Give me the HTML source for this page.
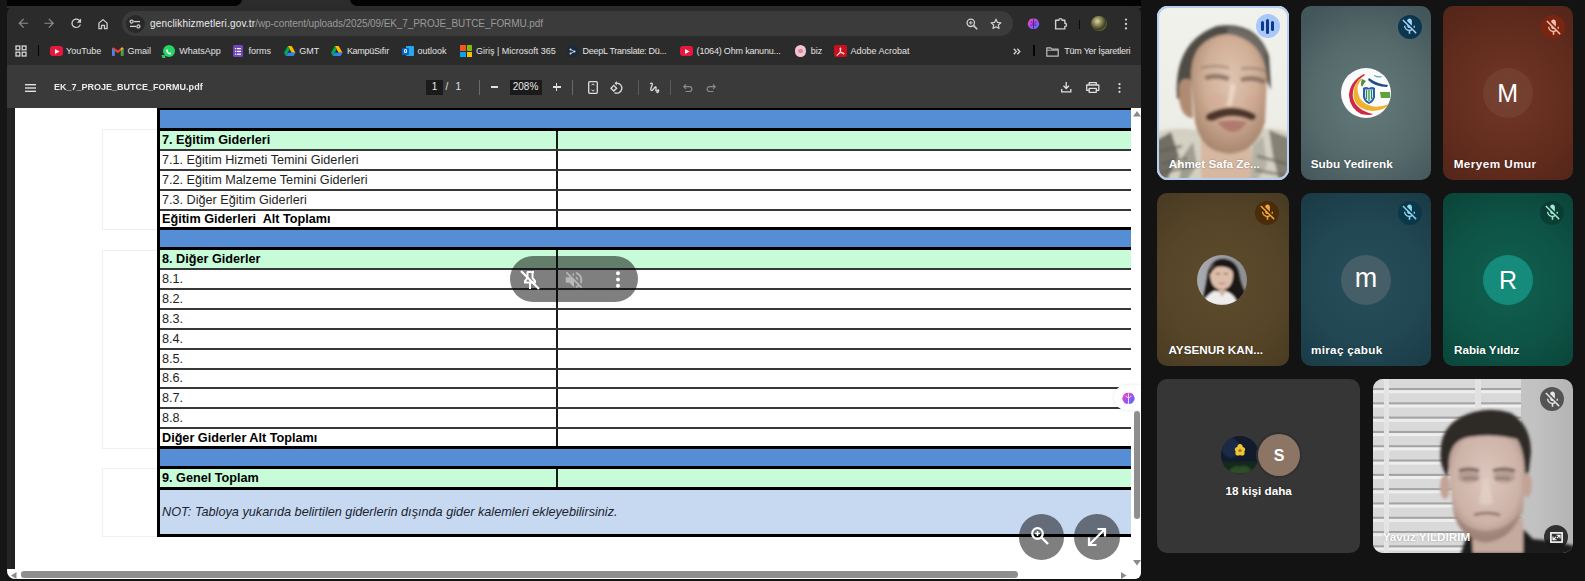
<!DOCTYPE html><html><head><meta charset='utf-8'><style>
*{margin:0;padding:0;box-sizing:border-box}
html,body{width:1585px;height:581px;overflow:hidden}
body{background:#131313;position:relative;font-family:"Liberation Sans",sans-serif}
.a{position:absolute}
.tn{font-size:12.65px;color:#1e1e1e;white-space:pre}
.tb{font-size:12.65px;color:#000;font-weight:bold;white-space:pre}
.bm{font-size:9px;color:#e3e3e3;white-space:pre;line-height:12px;top:45px}
svg{position:absolute;overflow:visible}
</style></head><body>
<div class="a" style="left:0;top:0;width:1141px;height:8px;background:#2c2c2c"></div>
<div class="a" style="left:0;top:-6px;width:242px;height:12px;border-radius:0 0 7px 0;background:#030303"></div>
<div class="a" style="left:350px;top:-6px;width:791px;height:12px;border-radius:0 0 0 7px;background:#030303"></div>
<div class="a" style="left:0;top:0;width:7px;height:581px;background:#161616"></div>
<div class="a" style="left:7px;top:6px;width:1134px;height:573px;background:#2b2b2b;border-radius:8px 8px 6px 8px;overflow:hidden">
<div class="a" style="left:0;top:59px;width:1134px;height:43px;background:#3a3a3a"></div>
<div class="a" style="left:0;top:102px;width:1134px;height:471px;background:#fff"></div>
<div class="a" style="left:0;top:102px;width:8px;height:461px;background:linear-gradient(90deg,#262626,#1e1e1e)"></div>
</div>
<svg style="left:15.65px;top:16.15px" width="14.5" height="14.5" viewBox="0 0 24 24"><path d="M20 11H7.83l5.59-5.59L12 4l-8 8 8 8 1.41-1.41L7.83 13H20v-2z" fill="#8c8c8c"/></svg>
<svg style="left:42.25px;top:16.15px" width="14.5" height="14.5" viewBox="0 0 24 24"><path d="M4 11h12.17l-5.59-5.59L12 4l8 8-8 8-1.41-1.41L16.17 13H4v-2z" fill="#8c8c8c"/></svg>
<svg style="left:69.15px;top:16.05px" width="14.5" height="14.5" viewBox="0 0 24 24"><path d="M17.65 6.35C16.2 4.9 14.21 4 12 4c-4.42 0-7.99 3.58-7.99 8s3.57 8 7.99 8c3.73 0 6.84-2.55 7.73-6h-2.08c-.82 2.33-3.04 4-5.65 4-3.31 0-6-2.69-6-6s2.69-6 6-6c1.66 0 3.14.69 4.22 1.78L13 11h7V4l-2.35 2.35z" fill="#d0d0d0"/></svg>
<svg style="left:95.80px;top:16.80px" width="14" height="14" viewBox="0 0 24 24"><path d="M5 20V10.5L12 4.5l7 6V20h-4.5v-5.5h-5V20z" fill="none" stroke="#d0d0d0" stroke-width="2.2" stroke-linejoin="round"/></svg>
<div class="a" style="left:122px;top:11px;width:891px;height:25px;border-radius:12.5px;background:#3b3b3b"></div>
<div class="a" style="left:125.5px;top:14.5px;width:19px;height:18px;border-radius:50%;background:#292929"></div>
<svg style="left:128.50px;top:18.00px" width="12" height="12" viewBox="0 0 12 12"><g stroke="#d0d0d0" stroke-width="1.3" fill="none"><circle cx="2.6" cy="3.6" r="1.5"/><path d="M5 3.6H11"/><circle cx="9.4" cy="8.4" r="1.5"/><path d="M1 8.4H7"/></g></svg>
<div class="a" style="left:150px;top:17px;font-size:10px;line-height:13px;white-space:pre;color:#9a9a9a"><span style="color:#ececec;letter-spacing:0.18px">genclikhizmetleri.gov.tr</span><span style="letter-spacing:-0.1px">/wp-content/uploads/2025/09/EK_7_PROJE_BUTCE_FORMU.pdf</span></div>
<svg style="left:966.20px;top:17.80px" width="12" height="12" viewBox="0 0 12 12"><g fill="none" stroke="#d0d0d0"><circle cx="4.8" cy="4.8" r="3.7" stroke-width="1.3"/><path d="M7.6 7.6L11.2 11.2" stroke-width="1.6"/><path d="M4.8 3v3.6M3 4.8h3.6" stroke-width="1"/></g></svg>
<svg style="left:989.80px;top:17.50px" width="12" height="12" viewBox="0 0 12 12"><path d="M6 1.2l1.45 3.2 3.45.35-2.6 2.3.75 3.4L6 8.7 2.95 10.45l.75-3.4-2.6-2.3 3.45-.35z" fill="none" stroke="#d0d0d0" stroke-width="1.2" stroke-linejoin="round"/></svg>
<svg style="left:1027.00px;top:17.30px" width="13" height="13" viewBox="0 0 12 12"><defs><linearGradient id="bg1" x1="0" y1="0" x2="1" y2="1"><stop offset="0" stop-color="#ff4fa0"/><stop offset=".5" stop-color="#a74cf2"/><stop offset="1" stop-color="#3d7bff"/></linearGradient></defs><path d="M6 1.5C4 1 1.5 2.3 1.3 4.5 0.3 5.5 0.5 8 1.8 9 2.5 11 5 11.5 6 10.5 7 11.5 9.5 11 10.2 9 11.5 8 11.7 5.5 10.7 4.5 10.5 2.3 8 1 6 1.5Z" fill="url(#bg1)"/><path d="M6 2v8.5M3.5 4.5c1 0 1.5.7 1.5 1.5M8.5 4.5c-1 0-1.5.7-1.5 1.5M3.2 7.5c1 .3 1.8 0 2.3-.5M8.8 7.5c-1 .3-1.8 0-2.3-.5" stroke="#3a1b6b" stroke-width=".7" fill="none"/></svg>
<svg style="left:1054.10px;top:17.30px" width="13" height="13" viewBox="0 0 12 12"><path d="M1.5 3h3a1.5 1.5 0 0 1 3 0h2.5v2.8a1.5 1.5 0 0 1 0 3V11H1.5z" fill="none" stroke="#d0d0d0" stroke-width="1.3" stroke-linejoin="round"/></svg>
<div class="a" style="left:1078.5px;top:19.5px;width:1.5px;height:9.5px;background:#0a0a0a"></div>
<div class="a" style="left:1091.3px;top:15.8px;width:15.5px;height:15.5px;border-radius:50%;background:radial-gradient(circle at 40% 35%,#d9d6b0 0,#8b8a55 30%,#3f3d22 60%,#7d7c62 85%,#a8a890 100%)"></div>
<svg style="left:1120.00px;top:18.00px" width="12" height="12" viewBox="0 0 12 12"><g fill="#d0d0d0"><circle cx="6" cy="1.6" r="1.15"/><circle cx="6" cy="6" r="1.15"/><circle cx="6" cy="10.4" r="1.15"/></g></svg>
<svg style="left:15.20px;top:45.00px" width="12" height="12" viewBox="0 0 12 12"><g fill="none" stroke="#d6d6d6" stroke-width="1.3"><rect x="1" y="1" width="3.8" height="3.8"/><rect x="7.2" y="1" width="3.8" height="3.8"/><rect x="1" y="7.2" width="3.8" height="3.8"/><rect x="7.2" y="7.2" width="3.8" height="3.8"/></g></svg>
<div class="a" style="left:37.5px;top:45px;width:1.5px;height:11px;background:#050505"></div>
<div class="a" style="left:49.5px;top:46px;width:13.5px;height:10px;border-radius:3px;background:#e8173c"></div><svg style="left:54.5px;top:48.5px" width="5" height="5"><path d="M0 0L4.5 2.5 0 5z" fill="#fff"/></svg>
<div class="a bm" style="left:66px">YouTube</div>
<svg style="left:112px;top:46.5px" width="11.5" height="9" viewBox="0 0 12 9"><path d="M0 1.2V9h2.8V3.8L6 6.2 9.2 3.8V9H12V1.2L10.5 0 6 3.4 1.5 0z" fill="#ea4335"/><path d="M0 1.2V9h2.8V3.8z" fill="#4285f4"/><path d="M9.2 3.8V9H12V1.2z" fill="#34a853"/><path d="M12 1.2L10.5 0 9.2 1v2.8z" fill="#fbbc04"/></svg>
<div class="a bm" style="left:127.6px">Gmail</div>
<div class="a" style="left:162.5px;top:45px;width:12px;height:12px;border-radius:50%;background:#25d366"></div><svg style="left:165px;top:47.5px" width="7" height="7" viewBox="0 0 7 7"><path d="M1.5 1.5c.3-.4.8-.4 1 0l.4 1c.1.3-.3.6-.3.6.4.8 1 1.4 1.8 1.8 0 0 .3-.4.6-.3l1 .4c.4.2.4.7 0 1-.8.7-2 .5-3.3-.5C1.5 4.5.8 2.4 1.5 1.5z" fill="#fff"/></svg>
<div class="a" style="left:162px;top:54.5px;width:3px;height:3px;background:#25d366;transform:skewX(20deg)"></div>
<div class="a bm" style="left:179.3px">WhatsApp</div>
<div class="a" style="left:233px;top:45px;width:10px;height:12px;border-radius:1.5px;background:#7248b9"></div>
<svg style="left:235px;top:47.5px" width="6" height="7"><g fill="#fff"><rect x="0" y="0" width="1.2" height="1.2"/><rect x="2" y="0" width="4" height="1.2"/><rect x="0" y="2.8" width="1.2" height="1.2"/><rect x="2" y="2.8" width="4" height="1.2"/><rect x="0" y="5.6" width="1.2" height="1.2"/><rect x="2" y="5.6" width="4" height="1.2"/></g></svg>
<div class="a bm" style="left:248.4px">forms</div>
<svg style="left:283.5px;top:46px" width="11.5" height="10" viewBox="0 0 12 10.4"><path d="M4 0h4l4 6.9h-4z" fill="#ffba00"/><path d="M4 0L0 6.9l2 3.5L6 3.5z" fill="#00ac47"/><path d="M2 10.4h8l2-3.5H4z" fill="#2684fc"/></svg>
<div class="a bm" style="left:299.3px">GMT</div>
<svg style="left:331px;top:46px" width="11.5" height="10" viewBox="0 0 12 10.4"><path d="M4 0h4l4 6.9h-4z" fill="#ffba00"/><path d="M4 0L0 6.9l2 3.5L6 3.5z" fill="#00ac47"/><path d="M2 10.4h8l2-3.5H4z" fill="#2684fc"/></svg>
<div class="a bm" style="left:346.9px;letter-spacing:-0.3px">KampüSıfır</div>
<div class="a" style="left:406px;top:46px;width:8px;height:10px;border-radius:1px;background:#28a8ea"></div><div class="a" style="left:402px;top:47.5px;width:7px;height:7px;border-radius:1px;background:#0a64c4"></div><div class="a" style="left:403.8px;top:49.2px;width:3.4px;height:3.6px;border-radius:50%;border:1px solid #fff"></div>
<div class="a bm" style="left:417.6px">outlook</div>
<div class="a" style="left:460px;top:45px;width:5.5px;height:5.5px;background:#f35325"></div><div class="a" style="left:466.5px;top:45px;width:5.5px;height:5.5px;background:#81bc06"></div><div class="a" style="left:460px;top:51.5px;width:5.5px;height:5.5px;background:#05a6f0"></div><div class="a" style="left:466.5px;top:51.5px;width:5.5px;height:5.5px;background:#ffba08"></div>
<div class="a bm" style="left:476px">Giriş | Microsoft 365</div>
<div class="a" style="left:566.5px;top:45px;width:12px;height:12px;border-radius:50%;background:#1c2a38"></div>
<svg style="left:569px;top:47.5px" width="7" height="7" viewBox="0 0 7 7"><g fill="#cfe3ff"><circle cx="1.5" cy="1.5" r="1"/><circle cx="5.5" cy="3.5" r="1"/><circle cx="1.5" cy="5.5" r="1"/></g><path d="M1.5 1.5L5.5 3.5 1.5 5.5" stroke="#cfe3ff" stroke-width=".8" fill="none"/></svg>
<div class="a bm" style="left:582.6px;letter-spacing:-0.28px">DeepL Translate: Dü...</div>
<div class="a" style="left:679.5px;top:46px;width:13.5px;height:10px;border-radius:3px;background:#e8173c"></div><svg style="left:684.5px;top:48.5px" width="5" height="5"><path d="M0 0L4.5 2.5 0 5z" fill="#fff"/></svg>
<div class="a bm" style="left:696.6px;letter-spacing:-0.18px">(1064) Ohm kanunu...</div>
<div class="a" style="left:794.5px;top:45px;width:11.5px;height:11.5px;border-radius:50%;background:#f1c4cf"></div><div class="a" style="left:798px;top:48.5px;width:4.5px;height:4.5px;border-radius:50%;background:#d88a9c"></div>
<div class="a bm" style="left:810.7px">biz</div>
<div class="a" style="left:834px;top:45px;width:12.5px;height:12px;border-radius:2px;background:#c8101e"></div>
<svg style="left:836px;top:46.5px" width="9" height="9" viewBox="0 0 9 9"><path d="M4.5 .8C3.8 .8 4 3 4.8 4.6 5.6 6.1 7.8 7.6 8.2 6.8 8.6 6 6 5.5 4.5 5.8 3 6.1 1 7.6 .9 8.2 .8 8.8 2.7 7.3 3.6 5.8 4.6 4.1 5.2.8 4.5.8z" fill="none" stroke="#fff" stroke-width=".9"/></svg>
<div class="a bm" style="left:850.5px">Adobe Acrobat</div>
<svg style="left:1013px;top:47.5px" width="8" height="7" viewBox="0 0 8 7"><path d="M.8 .8L3.3 3.5.8 6.2M4.3.8L6.8 3.5 4.3 6.2" stroke="#d6d6d6" stroke-width="1.3" fill="none"/></svg>
<div class="a" style="left:1033px;top:45px;width:1.5px;height:11px;background:#050505"></div>
<svg style="left:1046px;top:46.5px" width="13" height="10" viewBox="0 0 13 10"><path d="M.8 .8h4l1.3 1.4h6.1v7H.8z" fill="none" stroke="#bdbdbd" stroke-width="1.2" stroke-linejoin="round"/><path d="M.8 3.2h11.4" stroke="#bdbdbd" stroke-width="1"/></svg>
<div class="a bm" style="left:1064.3px;letter-spacing:-0.25px">Tüm Yer İşaretleri</div>
<svg style="left:25px;top:83.5px" width="11" height="8" viewBox="0 0 11 8"><g fill="#e0e0e0"><rect x="0" y="0" width="11" height="1.4"/><rect x="0" y="3.3" width="11" height="1.4"/><rect x="0" y="6.6" width="11" height="1.4"/></g></svg>
<div class="a" style="left:54px;top:81.3px;font-size:9.5px;line-height:11px;font-weight:bold;color:#ececec;white-space:pre;transform-origin:0 0;transform:scaleX(0.948)">EK_7_PROJE_BUTCE_FORMU.pdf</div>
<div class="a" style="left:426px;top:79.5px;width:17px;height:15px;background:#1b1b1b"></div>
<div class="a" style="left:426px;top:81px;width:17px;text-align:center;font-size:10px;line-height:12px;color:#e8e8e8">1</div>
<div class="a" style="left:445.5px;top:81px;font-size:10px;line-height:12px;color:#e0e0e0;white-space:pre">/</div><div class="a" style="left:455.5px;top:81px;font-size:10px;line-height:12px;color:#e0e0e0;white-space:pre">1</div>
<div class="a" style="left:478.5px;top:80px;width:1.2px;height:15px;background:#6a6a6a"></div>
<div class="a" style="left:490.8px;top:86.3px;width:7.5px;height:1.4px;background:#e0e0e0"></div>
<div class="a" style="left:509.5px;top:79.5px;width:32px;height:15px;background:#1b1b1b"></div>
<div class="a" style="left:509.5px;top:81px;width:32px;text-align:center;font-size:10px;line-height:12px;color:#e8e8e8">208%</div>
<div class="a" style="left:552.5px;top:86.3px;width:8px;height:1.4px;background:#e0e0e0"></div><div class="a" style="left:555.8px;top:83px;width:1.4px;height:8px;background:#e0e0e0"></div>
<div class="a" style="left:572px;top:80px;width:1.2px;height:15px;background:#6a6a6a"></div>
<svg style="left:587.5px;top:80.5px" width="10" height="13" viewBox="0 0 10 13"><rect x=".7" y=".7" width="8.6" height="11.6" rx="1" fill="none" stroke="#e0e0e0" stroke-width="1.3"/><path d="M3.5 4.3L5 2.8 6.5 4.3M3.5 8.7L5 10.2 6.5 8.7" fill="none" stroke="#e0e0e0" stroke-width="1"/></svg>
<svg style="left:609.5px;top:81px" width="13.5" height="13" viewBox="0 0 13.5 13"><path d="M6.5 2.2A5 5 0 1 1 4.5 11.6" fill="none" stroke="#e0e0e0" stroke-width="1.3"/><path d="M6.8 0L6.8 4.4 4.6 2.2z" fill="#e0e0e0"/><rect x="1.8" y="5.2" width="4" height="4" transform="rotate(45 3.8 7.2)" fill="none" stroke="#e0e0e0" stroke-width="1.3"/></svg>
<div class="a" style="left:637.5px;top:80px;width:1.2px;height:15px;background:#5a5a5a"></div>
<svg style="left:648.5px;top:81.5px" width="11" height="12" viewBox="0 0 11 12"><path d="M1.5 1.5C3 .5 4 1.5 3 3.5S1 8 2.5 8.5 5 5 6.5 5 6 9 7.5 9 9 7.5 9.5 8 9 11 8 10.5" fill="none" stroke="#e0e0e0" stroke-width="1.3" stroke-linecap="round"/></svg>
<div class="a" style="left:670px;top:80px;width:1.2px;height:15px;background:#5a5a5a"></div>
<svg style="left:683px;top:83.5px" width="10" height="8" viewBox="0 0 10 8"><path d="M3 .5L.8 2.7 3 4.9M.8 2.7H6.5A2.4 2.4 0 0 1 6.5 7.5H2.5" fill="none" stroke="#8a8a8a" stroke-width="1.2"/></svg>
<svg style="left:706px;top:83.5px" width="10" height="8" viewBox="0 0 10 8"><path d="M7 .5L9.2 2.7 7 4.9M9.2 2.7H3.5A2.4 2.4 0 0 0 3.5 7.5H7.5" fill="none" stroke="#8a8a8a" stroke-width="1.2"/></svg>
<svg style="left:1060.5px;top:82px" width="10.5" height="10.5" viewBox="0 0 10.5 10.5"><path d="M5.25 0V6.3M2.5 3.8L5.25 6.5 8 3.8M.7 7v2.8h9.1V7" fill="none" stroke="#e0e0e0" stroke-width="1.3"/></svg>
<svg style="left:1086px;top:82px" width="13.5" height="11" viewBox="0 0 13.5 11"><path d="M3.2 3V.7h7.1V3M3.2 8.3H.7V3h12.1v5.3h-2.5M3.2 6.3h7.1v4H3.2z" fill="none" stroke="#e0e0e0" stroke-width="1.3" stroke-linejoin="round"/></svg>
<svg style="left:1117.5px;top:82.5px" width="3" height="10" viewBox="0 0 3 10"><g fill="#e0e0e0"><circle cx="1.5" cy="1.2" r="1.1"/><circle cx="1.5" cy="5" r="1.1"/><circle cx="1.5" cy="8.8" r="1.1"/></g></svg>
<div class="a" style="left:102px;top:129px;width:60px;height:101px;border:1px solid #efefef;border-right:none"></div>
<div class="a" style="left:102px;top:250px;width:60px;height:199px;border:1px solid #efefef;border-right:none"></div>
<div class="a" style="left:102px;top:468px;width:60px;height:69px;border:1px solid #efefef;border-right:none"></div>
<div class="a" style="left:157px;top:108px;width:974px;height:22px;background:#558ed5"></div>
<div class="a" style="left:157px;top:130px;width:974px;height:20px;background:#c8fcd9"></div>
<div class="a" style="left:157px;top:150px;width:974px;height:20px;background:#ffffff"></div>
<div class="a" style="left:157px;top:170px;width:974px;height:20px;background:#ffffff"></div>
<div class="a" style="left:157px;top:190px;width:974px;height:20px;background:#ffffff"></div>
<div class="a" style="left:157px;top:210px;width:974px;height:19px;background:#ffffff"></div>
<div class="a" style="left:157px;top:229px;width:974px;height:20px;background:#558ed5"></div>
<div class="a" style="left:157px;top:249px;width:974px;height:20px;background:#c8fcd9"></div>
<div class="a" style="left:157px;top:269px;width:974px;height:20px;background:#ffffff"></div>
<div class="a" style="left:157px;top:289px;width:974px;height:20px;background:#ffffff"></div>
<div class="a" style="left:157px;top:309px;width:974px;height:20px;background:#ffffff"></div>
<div class="a" style="left:157px;top:329px;width:974px;height:20px;background:#ffffff"></div>
<div class="a" style="left:157px;top:349px;width:974px;height:20px;background:#ffffff"></div>
<div class="a" style="left:157px;top:369px;width:974px;height:19px;background:#ffffff"></div>
<div class="a" style="left:157px;top:388px;width:974px;height:20px;background:#ffffff"></div>
<div class="a" style="left:157px;top:408px;width:974px;height:20px;background:#ffffff"></div>
<div class="a" style="left:157px;top:428px;width:974px;height:20px;background:#ffffff"></div>
<div class="a" style="left:157px;top:448px;width:974px;height:20px;background:#558ed5"></div>
<div class="a" style="left:157px;top:468px;width:974px;height:21px;background:#c8fcd9"></div>
<div class="a" style="left:157px;top:489px;width:974px;height:45px;background:#c6d9f1"></div>
<div class="a" style="left:556px;top:130px;width:2px;height:20px;background:#1a1a1a"></div>
<div class="a" style="left:556px;top:150px;width:2px;height:20px;background:#1a1a1a"></div>
<div class="a" style="left:556px;top:170px;width:2px;height:20px;background:#1a1a1a"></div>
<div class="a" style="left:556px;top:190px;width:2px;height:20px;background:#1a1a1a"></div>
<div class="a" style="left:556px;top:210px;width:2px;height:19px;background:#1a1a1a"></div>
<div class="a" style="left:556px;top:249px;width:2px;height:20px;background:#1a1a1a"></div>
<div class="a" style="left:556px;top:269px;width:2px;height:20px;background:#1a1a1a"></div>
<div class="a" style="left:556px;top:289px;width:2px;height:20px;background:#1a1a1a"></div>
<div class="a" style="left:556px;top:309px;width:2px;height:20px;background:#1a1a1a"></div>
<div class="a" style="left:556px;top:329px;width:2px;height:20px;background:#1a1a1a"></div>
<div class="a" style="left:556px;top:349px;width:2px;height:20px;background:#1a1a1a"></div>
<div class="a" style="left:556px;top:369px;width:2px;height:19px;background:#1a1a1a"></div>
<div class="a" style="left:556px;top:388px;width:2px;height:20px;background:#1a1a1a"></div>
<div class="a" style="left:556px;top:408px;width:2px;height:20px;background:#1a1a1a"></div>
<div class="a" style="left:556px;top:428px;width:2px;height:20px;background:#1a1a1a"></div>
<div class="a" style="left:556px;top:468px;width:2px;height:21px;background:#1a1a1a"></div>
<div class="a" style="left:157px;top:108px;width:974px;height:2px;background:#000"></div>
<div class="a" style="left:157px;top:128px;width:974px;height:3px;background:#000"></div>
<div class="a" style="left:157px;top:149px;width:974px;height:2px;background:#383838"></div>
<div class="a" style="left:157px;top:169px;width:974px;height:2px;background:#383838"></div>
<div class="a" style="left:157px;top:189px;width:974px;height:2px;background:#383838"></div>
<div class="a" style="left:157px;top:209px;width:974px;height:2px;background:#383838"></div>
<div class="a" style="left:157px;top:227px;width:974px;height:3px;background:#000"></div>
<div class="a" style="left:157px;top:247px;width:974px;height:3px;background:#000"></div>
<div class="a" style="left:157px;top:268px;width:974px;height:2px;background:#383838"></div>
<div class="a" style="left:157px;top:288px;width:974px;height:2px;background:#383838"></div>
<div class="a" style="left:157px;top:308px;width:974px;height:2px;background:#383838"></div>
<div class="a" style="left:157px;top:328px;width:974px;height:2px;background:#383838"></div>
<div class="a" style="left:157px;top:348px;width:974px;height:2px;background:#383838"></div>
<div class="a" style="left:157px;top:368px;width:974px;height:2px;background:#383838"></div>
<div class="a" style="left:157px;top:387px;width:974px;height:2px;background:#383838"></div>
<div class="a" style="left:157px;top:407px;width:974px;height:2px;background:#383838"></div>
<div class="a" style="left:157px;top:427px;width:974px;height:2px;background:#383838"></div>
<div class="a" style="left:157px;top:446px;width:974px;height:3px;background:#000"></div>
<div class="a" style="left:157px;top:466px;width:974px;height:3px;background:#000"></div>
<div class="a" style="left:157px;top:487px;width:974px;height:3px;background:#000"></div>
<div class="a" style="left:157px;top:534px;width:974px;height:3px;background:#000"></div>
<div class="a" style="left:157px;top:108px;width:3px;height:429px;background:#000"></div>
<div class="a tb" style="left:162px;top:130px;height:20px;line-height:20px">7. Eğitim Giderleri</div>
<div class="a tn" style="left:162px;top:150px;height:20px;line-height:20px">7.1. Eğitim Hizmeti Temini Giderleri</div>
<div class="a tn" style="left:162px;top:170px;height:20px;line-height:20px">7.2. Eğitim Malzeme Temini Giderleri</div>
<div class="a tn" style="left:162px;top:190px;height:20px;line-height:20px">7.3. Diğer Eğitim Giderleri</div>
<div class="a tb" style="left:162px;top:210px;height:19px;line-height:19px">Eğitim Giderleri&nbsp; Alt Toplamı</div>
<div class="a tb" style="left:162px;top:249px;height:20px;line-height:20px">8. Diğer Giderler</div>
<div class="a tn" style="left:162px;top:269px;height:20px;line-height:20px">8.1.</div>
<div class="a tn" style="left:162px;top:289px;height:20px;line-height:20px">8.2.</div>
<div class="a tn" style="left:162px;top:309px;height:20px;line-height:20px">8.3.</div>
<div class="a tn" style="left:162px;top:329px;height:20px;line-height:20px">8.4.</div>
<div class="a tn" style="left:162px;top:349px;height:20px;line-height:20px">8.5.</div>
<div class="a tn" style="left:162px;top:369px;height:19px;line-height:19px">8.6.</div>
<div class="a tn" style="left:162px;top:388px;height:20px;line-height:20px">8.7.</div>
<div class="a tn" style="left:162px;top:408px;height:20px;line-height:20px">8.8.</div>
<div class="a tb" style="left:162px;top:428px;height:20px;line-height:20px">Diğer Giderler Alt Toplamı</div>
<div class="a tb" style="left:162px;top:468px;height:21px;line-height:21px">9. Genel Toplam</div>
<div class="a tn" style="left:162px;top:490.3px;height:45px;line-height:45px;font-style:italic;font-size:12.7px;color:#1c2430">NOT: Tabloya yukarıda belirtilen giderlerin dışında gider kalemleri ekleyebilirsiniz.</div>
<div class="a" style="left:1114px;top:385px;width:27px;height:25px;border-radius:12px 0 0 12px;background:#fff;box-shadow:0 0 3px rgba(0,0,0,.12)"></div>
<svg style="left:1120.5px;top:390.5px" width="15" height="14" viewBox="0 0 12 12"><defs><linearGradient id="bg2" x1="0" y1="0" x2="1" y2="1"><stop offset="0" stop-color="#ff4fa0"/><stop offset=".5" stop-color="#a74cf2"/><stop offset="1" stop-color="#3d7bff"/></linearGradient></defs><path d="M6 1.5C4 1 1.5 2.3 1.3 4.5 0.3 5.5 0.5 8 1.8 9 2.5 11 5 11.5 6 10.5 7 11.5 9.5 11 10.2 9 11.5 8 11.7 5.5 10.7 4.5 10.5 2.3 8 1 6 1.5Z" fill="url(#bg2)"/><path d="M6 2v8.5M3.5 4.5c1 0 1.5.7 1.5 1.5M8.5 4.5c-1 0-1.5.7-1.5 1.5" stroke="#fff" stroke-width=".7" fill="none"/></svg>
<svg style="left:1132.5px;top:111px" width="8" height="6"><path d="M0 5.5L4 0 8 5.5z" fill="#8a8a8a"/></svg>
<div class="a" style="left:1133.5px;top:410.5px;width:6px;height:108px;border-radius:3px;background:#8e8e8e"></div>
<svg style="left:1132.5px;top:560px" width="8" height="6"><path d="M0 0L4 5.5 8 0z" fill="#8a8a8a"/></svg>
<div class="a" style="left:21px;top:571px;width:997px;height:6.5px;border-radius:3.2px;background:#8e8e8e"></div>
<svg style="left:11px;top:571.5px" width="6" height="7"><path d="M5.5 0L0 3.5 5.5 7z" fill="#8a8a8a"/></svg>
<svg style="left:1121px;top:572px" width="6" height="7"><path d="M0 0L5.5 3.5 0 7z" fill="#8a8a8a"/></svg>
<div class="a" style="left:510px;top:256px;width:128px;height:45.5px;border-radius:23px;background:rgba(0,0,0,.5)"></div>
<svg style="left:519px;top:268.5px" width="22" height="22" viewBox="0 0 22 22"><path d="M8 3h7M13.5 3v6l2.5 3v1.5H6v-1.5l2.5-3V3M11 13.5V20" stroke="#fff" stroke-width="2" fill="none"/><path d="M2 2L20 20" stroke="#fff" stroke-width="2.2"/></svg>
<svg style="left:563px;top:268.5px" width="22" height="22" viewBox="0 0 24 24"><path d="M16.5 12c0-1.77-1.02-3.29-2.5-4.03v2.21l2.45 2.45c.03-.2.05-.41.05-.63zm2.5 0c0 .94-.2 1.82-.54 2.64l1.51 1.51C20.63 14.91 21 13.5 21 12c0-4.28-2.99-7.86-7-8.77v2.06c2.89.86 5 3.54 5 6.71zM4.27 3L3 4.27 7.73 9H3v6h4l5 5v-6.73l4.25 4.25c-.67.52-1.42.93-2.25 1.18v2.06c1.38-.31 2.63-.95 3.69-1.81L19.73 21 21 19.73l-9-9L4.27 3zM12 4L9.91 6.09 12 8.18V4z" fill="#b8b8b8"/></svg>
<svg style="left:615px;top:270.5px" width="6" height="17"><g fill="#fff"><circle cx="3" cy="2.2" r="2"/><circle cx="3" cy="8.5" r="2"/><circle cx="3" cy="14.8" r="2"/></g></svg>
<div class="a" style="left:1018.5px;top:514px;width:45.5px;height:45.5px;border-radius:50%;background:rgba(0,0,0,.5)"></div>
<svg style="left:1029px;top:525px" width="24" height="24" viewBox="0 0 24 24"><circle cx="8.5" cy="8.5" r="5.3" fill="none" stroke="#fff" stroke-width="2.2"/><path d="M12.5 12.5L19 19" stroke="#fff" stroke-width="2.4"/><path d="M8.5 6v5M6 8.5h5" stroke="#fff" stroke-width="1.6"/></svg>
<div class="a" style="left:1074px;top:514px;width:45.5px;height:45.5px;border-radius:50%;background:rgba(0,0,0,.5)"></div>
<svg style="left:1085px;top:525px" width="24" height="24" viewBox="0 0 24 24"><path d="M4 20L20 4M12.5 4H20V11.5M4 12.5V20H11.5" stroke="#fff" stroke-width="2.2" fill="none"/></svg>
<div class="a" style="left:1157px;top:6px;width:132px;height:174px;border-radius:11px;overflow:hidden;background:#e6e6df"><svg style="left:0;top:0" width="132" height="174" viewBox="0 0 132 174">
<defs>
<filter id="bl1" x="-10%" y="-10%" width="120%" height="120%"><feGaussianBlur stdDeviation="1.8"/></filter>
<radialGradient id="af" cx=".52" cy=".38" r=".62"><stop offset="0" stop-color="#dfc5b1"/><stop offset=".55" stop-color="#d0ae96"/><stop offset="1" stop-color="#a8856d"/></radialGradient>
<linearGradient id="abg" x1="0" y1="0" x2="0" y2="1"><stop offset="0" stop-color="#f2f2ed"/><stop offset=".6" stop-color="#eeeee9"/><stop offset="1" stop-color="#e4e3da"/></linearGradient>
</defs>
<rect width="132" height="174" fill="url(#abg)"/>
<g filter="url(#bl1)">
<path d="M-5 128 Q15 120 38 124 L96 124 Q118 120 137 128 V180 H-5z" fill="#d4d0c2"/>
<path d="M0 134 L14 126 L22 150 L10 174 H0z" fill="#5f5d54" opacity=".85"/>
<path d="M26 150 L36 136 L40 160 L30 174 H22z" fill="#8a887c" opacity=".7"/>
<path d="M112 124 L132 132 V174 H122 L116 150z" fill="#6f6d62" opacity=".8"/>
<path d="M96 140 L106 130 L110 160 L100 174 H92z" fill="#a09e92" opacity=".6"/>
<path d="M5 158 L30 152 M100 150 L130 158 M0 146 L25 140 M0 168 L36 160 M98 164 L132 170" stroke="#5f5d52" stroke-width="3" opacity=".6"/>
<path d="M44 126 Q68 170 94 126 L94 174 H44z" fill="#d6b7a0"/>
<path d="M20 92 Q16 36 60 20 Q100 14 112 50 L114 84 L104 62 Q96 36 70 30 Q44 32 36 64 L32 100z" fill="#4f4b45"/>
<path d="M70 22 Q96 20 108 44 L110 70 Q100 40 72 30z" fill="#75726a" opacity=".8"/>
<path d="M34 74 Q32 32 70 28 Q106 32 110 72 L108 116 Q100 146 72 148 Q44 146 38 116z" fill="url(#af)"/>
<path d="M22 80 Q24 70 34 74 L36 112 Q24 112 22 92z" fill="#b08b72"/>
<path d="M48 72 Q60 68 72 73 M84 74 Q96 70 108 76" stroke="#7a6658" stroke-width="5" fill="none" opacity=".75"/>
<path d="M44 62 Q58 58 72 62 M84 63 Q98 60 110 66" stroke="#8a786c" stroke-width="2.5" fill="none" opacity=".6"/>
<ellipse cx="58" cy="94" rx="10" ry="7" fill="#d7a796" opacity=".35"/>
<ellipse cx="96" cy="96" rx="9" ry="7" fill="#d0a090" opacity=".3"/>
<path d="M76 78 Q74 94 72 100" stroke="#f2e0d2" stroke-width="5" fill="none" opacity=".7"/>
<path d="M50 108 Q75 95 98 108 Q101 115 93 114 Q75 106 56 115 Q46 115 50 108z" fill="#4e3629"/>
<path d="M60 116 Q76 112 90 116 Q84 126 76 126 Q68 126 60 116z" fill="#b07a6e"/>
<path d="M40 110 Q44 138 72 148 Q100 138 106 110 Q104 136 72 144 Q44 136 40 110z" fill="#b08d76" opacity=".45"/>
</g>
</svg></div>
<div class="a" style="left:1157px;top:6px;width:132px;height:174px;border-radius:11px;border:2.5px solid #b9cff2"></div>
<div class="a" style="left:1255.5px;top:14px;width:24px;height:24px;border-radius:50%;background:#a8c7fa"></div>
<div class="a" style="left:1260.8px;top:21px;width:3.4px;height:10px;border-radius:1.7px;background:#0b3a8a"></div><div class="a" style="left:1265.8px;top:18.5px;width:3.4px;height:15px;border-radius:1.7px;background:#0b3a8a"></div><div class="a" style="left:1270.8px;top:21px;width:3.4px;height:10px;border-radius:1.7px;background:#0b3a8a"></div>
<div class="a" style="left:1168.8px;top:157.6px;font-size:11.7px;line-height:11.7px;font-weight:bold;color:#fff;white-space:pre;letter-spacing:0px;text-shadow:0 0 2px rgba(0,0,0,.35)">Ahmet Safa Ze...</div>
<div class="a" style="left:1301px;top:6px;width:130px;height:174px;border-radius:10px;background:radial-gradient(ellipse 75% 62% at 52% 55%,#647a7a 0%,#55696b 60%,#43575b 100%);overflow:hidden"></div>
<div class="a" style="left:1397.8px;top:14.5px;width:24px;height:24px;border-radius:50%;background:#0c3550"></div><svg style="left:1400.3px;top:17.0px" width="19" height="19" viewBox="0 0 24 24"><path d="M19 11h-1.7c0 .74-.16 1.43-.43 2.05l1.23 1.23c.56-.98.9-2.09.9-3.28zm-4.02.17c0-.06.02-.11.02-.17V5c0-1.66-1.34-3-3-3S9 3.34 9 5v.18l5.98 5.99zM4.27 3L3 4.27l6.01 6.01V11c0 1.66 1.33 3 2.99 3 .22 0 .44-.03.65-.08l1.66 1.66c-.71.33-1.5.52-2.31.52-2.76 0-5.3-2.1-5.3-5.1H5c0 3.41 2.72 6.23 6 6.72V21h2v-3.28c.91-.13 1.77-.45 2.54-.9L19.73 21 21 19.73 4.27 3z" fill="#a3d3f5"/></svg>
<svg style="left:1340.5px;top:67.5px" width="50" height="50" viewBox="0 0 50 50">
<defs><filter id="bl5"><feGaussianBlur stdDeviation="0.45"/></filter></defs>
<circle cx="25" cy="25" r="25" fill="#fbfbfb"/>
<g filter="url(#bl5)">
<path d="M23 6 Q8 14 8 28 Q9 40 20 46 Q30 48 32 46 Q15 42 12 30 Q10 16 24 7z" fill="#cf2a45"/>
<path d="M18 11 Q11 20 13 31 Q17 42 32 43 Q44 42 48 36 Q38 40 30 38 Q19 35 17 25 Q15 17 21 11z" fill="#f0b12e"/>
<path d="M21 11 Q19 16 21 19 Q23 15 25 13z" fill="#4b8f3a"/>
<path d="M28 10 Q36 16 47 17 L46 19 Q34 19 27 12z" fill="#1d4f86"/>
<path d="M33 7 Q38 9 41 8 L40 9.5 Q36 10 33 8z" fill="#5aa6c9"/>
<path d="M39 24 L49 24 L49 30 L40 30z" fill="#5ea23b"/>
<path d="M22 20 Q25 18 28 20 Q31 18 34 20 L34 29 Q33 34 28 36 Q23 34 22 29z" fill="#2660a8"/>
<path d="M24 21.5 L32 21.5 L32 29 Q31 32.5 28 34 Q25 32.5 24 29z" fill="#e9f2ee"/>
<path d="M25.5 22v9M28 22v11M30.5 22v9" stroke="#2f8a55" stroke-width="1.2"/>
</g>
</svg>
<div class="a" style="left:1310.7px;top:157.6px;font-size:11.7px;line-height:11.7px;font-weight:bold;color:#fff;white-space:pre;letter-spacing:0.1px;text-shadow:0 0 2px rgba(0,0,0,.35)">Subu Yedirenk</div>
<div class="a" style="left:1443px;top:6px;width:130px;height:174px;border-radius:10px;background:radial-gradient(ellipse 75% 60% at 50% 52%,#6f3726 0%,#632d1e 60%,#55261a 100%);overflow:hidden"></div>
<div class="a" style="left:1541.2px;top:15px;width:24px;height:24px;border-radius:50%;background:#7a2511"></div><svg style="left:1543.7px;top:17.5px" width="19" height="19" viewBox="0 0 24 24"><path d="M19 11h-1.7c0 .74-.16 1.43-.43 2.05l1.23 1.23c.56-.98.9-2.09.9-3.28zm-4.02.17c0-.06.02-.11.02-.17V5c0-1.66-1.34-3-3-3S9 3.34 9 5v.18l5.98 5.99zM4.27 3L3 4.27l6.01 6.01V11c0 1.66 1.33 3 2.99 3 .22 0 .44-.03.65-.08l1.66 1.66c-.71.33-1.5.52-2.31.52-2.76 0-5.3-2.1-5.3-5.1H5c0 3.41 2.72 6.23 6 6.72V21h2v-3.28c.91-.13 1.77-.45 2.54-.9L19.73 21 21 19.73 4.27 3z" fill="#f6c0ad"/></svg>
<div class="a" style="left:1482.6px;top:68.3px;width:50px;height:50px;border-radius:50%;background:rgba(255,255,255,0.06)"></div><div class="a" style="left:1477.6px;top:78.3px;width:60px;text-align:center;font-size:25px;line-height:30.0px;color:#fff">M</div>
<div class="a" style="left:1453.7px;top:157.6px;font-size:11.7px;line-height:11.7px;font-weight:bold;color:#fff;white-space:pre;letter-spacing:0.45px;text-shadow:0 0 2px rgba(0,0,0,.35)">Meryem Umur</div>
<div class="a" style="left:1157px;top:193px;width:132px;height:173px;border-radius:10px;background:radial-gradient(ellipse 75% 60% at 50% 52%,#5d4b2c 0%,#564528 60%,#4a3c23 100%);overflow:hidden"></div>
<div class="a" style="left:1255px;top:200.6px;width:24px;height:24px;border-radius:50%;background:#4a2c08"></div><svg style="left:1257.5px;top:203.1px" width="19" height="19" viewBox="0 0 24 24"><path d="M19 11h-1.7c0 .74-.16 1.43-.43 2.05l1.23 1.23c.56-.98.9-2.09.9-3.28zm-4.02.17c0-.06.02-.11.02-.17V5c0-1.66-1.34-3-3-3S9 3.34 9 5v.18l5.98 5.99zM4.27 3L3 4.27l6.01 6.01V11c0 1.66 1.33 3 2.99 3 .22 0 .44-.03.65-.08l1.66 1.66c-.71.33-1.5.52-2.31.52-2.76 0-5.3-2.1-5.3-5.1H5c0 3.41 2.72 6.23 6 6.72V21h2v-3.28c.91-.13 1.77-.45 2.54-.9L19.73 21 21 19.73 4.27 3z" fill="#f4a83c"/></svg>
<svg style="left:1197.2px;top:254.8px" width="50" height="50" viewBox="0 0 50 50">
<defs><clipPath id="ac"><circle cx="25" cy="25" r="25"/></clipPath><filter id="bl4"><feGaussianBlur stdDeviation="0.9"/></filter>
<linearGradient id="agb" x1="0" y1="0" x2="1" y2="0"><stop offset="0" stop-color="#a9abb0"/><stop offset="1" stop-color="#8d8e92"/></linearGradient></defs>
<g clip-path="url(#ac)">
<rect width="50" height="50" fill="url(#agb)"/>
<g filter="url(#bl4)">
<path d="M6 44 Q9 30 11 17 Q15 4 26 4 Q39 5 42 18 Q44 32 50 40 V50 H6z" fill="#1a1614"/>
<path d="M13 19 Q13 8 24.5 8 Q36 8 36 20 Q36 33 25 35 Q14 34 13 20z" fill="#dcbdaa"/>
<path d="M13 16 Q18 5 27 6 Q37 7 37 18 Q31 10 20 12 Q16 14 13 20z" fill="#1a1614"/>
<path d="M5 50 Q9 40 17 36 L31 37 Q38 40 41 50z" fill="#efedeb"/>
<path d="M21 35 L25 42 L30 35z" fill="#d5b3a0"/>
<path d="M19 19 Q21 18 23 19 M27 19 Q29 18 31 19" stroke="#6a4d40" stroke-width="1.2" fill="none"/>
<path d="M22 28 Q25 29.5 28 28" stroke="#a86f68" stroke-width="1.2" fill="none"/>
</g></g></svg>
<div class="a" style="left:1168.5px;top:343.9px;font-size:11.7px;line-height:11.7px;font-weight:bold;color:#fff;white-space:pre;letter-spacing:0px;text-shadow:0 0 2px rgba(0,0,0,.35)">AYSENUR KAN...</div>
<div class="a" style="left:1301px;top:193px;width:130px;height:173px;border-radius:10px;background:radial-gradient(ellipse 75% 60% at 50% 52%,#264e59 0%,#214753 60%,#1a3c47 100%);overflow:hidden"></div>
<div class="a" style="left:1397.5px;top:200.6px;width:24px;height:24px;border-radius:50%;background:#0b3849"></div><svg style="left:1400.0px;top:203.1px" width="19" height="19" viewBox="0 0 24 24"><path d="M19 11h-1.7c0 .74-.16 1.43-.43 2.05l1.23 1.23c.56-.98.9-2.09.9-3.28zm-4.02.17c0-.06.02-.11.02-.17V5c0-1.66-1.34-3-3-3S9 3.34 9 5v.18l5.98 5.99zM4.27 3L3 4.27l6.01 6.01V11c0 1.66 1.33 3 2.99 3 .22 0 .44-.03.65-.08l1.66 1.66c-.71.33-1.5.52-2.31.52-2.76 0-5.3-2.1-5.3-5.1H5c0 3.41 2.72 6.23 6 6.72V21h2v-3.28c.91-.13 1.77-.45 2.54-.9L19.73 21 21 19.73 4.27 3z" fill="#8fd5ef"/></svg>
<div class="a" style="left:1341px;top:254.8px;width:50px;height:50px;border-radius:50%;background:#455e67"></div><div class="a" style="left:1336px;top:261.6px;width:60px;text-align:center;font-size:27px;line-height:32.4px;color:#fff">m</div>
<div class="a" style="left:1311px;top:343.9px;font-size:11.7px;line-height:11.7px;font-weight:bold;color:#fff;white-space:pre;letter-spacing:0.3px;text-shadow:0 0 2px rgba(0,0,0,.35)">miraç çabuk</div>
<div class="a" style="left:1443px;top:193px;width:130px;height:173px;border-radius:10px;background:radial-gradient(ellipse 75% 60% at 50% 52%,#10604f 0%,#0e5446 60%,#0b463b 100%);overflow:hidden"></div>
<div class="a" style="left:1540px;top:200.6px;width:24px;height:24px;border-radius:50%;background:#0a3e35"></div><svg style="left:1542.5px;top:203.1px" width="19" height="19" viewBox="0 0 24 24"><path d="M19 11h-1.7c0 .74-.16 1.43-.43 2.05l1.23 1.23c.56-.98.9-2.09.9-3.28zm-4.02.17c0-.06.02-.11.02-.17V5c0-1.66-1.34-3-3-3S9 3.34 9 5v.18l5.98 5.99zM4.27 3L3 4.27l6.01 6.01V11c0 1.66 1.33 3 2.99 3 .22 0 .44-.03.65-.08l1.66 1.66c-.71.33-1.5.52-2.31.52-2.76 0-5.3-2.1-5.3-5.1H5c0 3.41 2.72 6.23 6 6.72V21h2v-3.28c.91-.13 1.77-.45 2.54-.9L19.73 21 21 19.73 4.27 3z" fill="#a6e6d2"/></svg>
<div class="a" style="left:1483px;top:254.8px;width:50px;height:50px;border-radius:50%;background:#148b7b"></div><div class="a" style="left:1478px;top:264.8px;width:60px;text-align:center;font-size:25px;line-height:30.0px;color:#fff">R</div>
<div class="a" style="left:1454px;top:343.9px;font-size:11.7px;line-height:11.7px;font-weight:bold;color:#fff;white-space:pre;letter-spacing:0px;text-shadow:0 0 2px rgba(0,0,0,.35)">Rabia Yıldız</div>
<div class="a" style="left:1157px;top:379px;width:203px;height:174px;border-radius:10px;background:#363637;overflow:hidden"></div>
<svg style="left:1221.3px;top:436.2px" width="38" height="38" viewBox="0 0 38 38">
<defs><clipPath id="fc"><circle cx="19" cy="19" r="19"/></clipPath><filter id="bl6"><feGaussianBlur stdDeviation="1"/></filter></defs>
<g clip-path="url(#fc)">
<rect width="38" height="38" fill="#111b2c"/>
<g filter="url(#bl6)">
<ellipse cx="10" cy="12" rx="9" ry="10" fill="#1d2c48"/>
<rect y="26" width="38" height="12" fill="#18291a"/>
<path d="M6 38 Q12 28 19 31 Q27 27 32 38z" fill="#2d4f26"/>
</g>
<g fill="#f0c535"><circle cx="16.5" cy="13.5" r="2.6"/><circle cx="21.5" cy="13.5" r="2.6"/><circle cx="19" cy="10.5" r="2.6"/><circle cx="17" cy="17" r="2.6"/><circle cx="21" cy="17" r="2.6"/></g>
<circle cx="19" cy="14.5" r="1.6" fill="#a4731a"/>
</g></svg>
<div class="a" style="left:1255.7px;top:431.9px;width:46.6px;height:46.6px;border-radius:50%;background:#303031"></div>
<div class="a" style="left:1257.7px;top:433.9px;width:42.6px;height:42.6px;border-radius:50%;background:#8d7566"></div><div class="a" style="left:1249px;top:445.6px;width:60px;text-align:center;font-size:16px;line-height:19.2px;color:#fff"><b>S</b></div>
<div class="a" style="left:1225.6px;top:485.4px;font-size:11.7px;line-height:11.7px;font-weight:bold;color:#fff;white-space:pre;letter-spacing:0px;text-shadow:0 0 2px rgba(0,0,0,.35)">18 kişi daha</div>
<div class="a" style="left:1373px;top:379px;width:200px;height:174px;border-radius:10px;overflow:hidden"><svg style="left:0;top:0" width="200" height="174" viewBox="0 0 200 174">
<defs>
<filter id="bl2" x="-10%" y="-10%" width="120%" height="120%"><feGaussianBlur stdDeviation="1.8"/></filter>
<filter id="bl3"><feGaussianBlur stdDeviation="0.7"/></filter>
<linearGradient id="yw" x1="0" y1="0" x2="1" y2="0"><stop offset="0" stop-color="#cdcdcd"/><stop offset=".8" stop-color="#c2c2c2"/><stop offset="1" stop-color="#b4b4b4"/></linearGradient>
<radialGradient id="yf" cx=".5" cy=".4" r=".62"><stop offset="0" stop-color="#dcc6bd"/><stop offset=".7" stop-color="#cdb3a8"/><stop offset="1" stop-color="#a88d82"/></radialGradient>
</defs>
<rect width="200" height="174" fill="url(#yw)"/>
<g filter="url(#bl3)">
<rect x="0" y="0" width="148" height="174" fill="#d9d9d9"/>
<rect x="0" y="9.0" width="148" height="2.2" fill="#8d8d8d" opacity=".7"/><rect x="0" y="11.2" width="148" height="3" fill="#f2f2f2" opacity=".8"/><rect x="0" y="23.3" width="148" height="2.2" fill="#8d8d8d" opacity=".7"/><rect x="0" y="25.5" width="148" height="3" fill="#f2f2f2" opacity=".8"/><rect x="0" y="37.6" width="148" height="2.2" fill="#8d8d8d" opacity=".7"/><rect x="0" y="39.800000000000004" width="148" height="3" fill="#f2f2f2" opacity=".8"/><rect x="0" y="51.900000000000006" width="148" height="2.2" fill="#8d8d8d" opacity=".7"/><rect x="0" y="54.10000000000001" width="148" height="3" fill="#f2f2f2" opacity=".8"/><rect x="0" y="66.2" width="148" height="2.2" fill="#8d8d8d" opacity=".7"/><rect x="0" y="68.4" width="148" height="3" fill="#f2f2f2" opacity=".8"/><rect x="0" y="80.5" width="148" height="2.2" fill="#8d8d8d" opacity=".7"/><rect x="0" y="82.7" width="148" height="3" fill="#f2f2f2" opacity=".8"/><rect x="0" y="94.80000000000001" width="148" height="2.2" fill="#8d8d8d" opacity=".7"/><rect x="0" y="97.00000000000001" width="148" height="3" fill="#f2f2f2" opacity=".8"/><rect x="0" y="109.10000000000001" width="148" height="2.2" fill="#8d8d8d" opacity=".7"/><rect x="0" y="111.30000000000001" width="148" height="3" fill="#f2f2f2" opacity=".8"/><rect x="0" y="123.4" width="148" height="2.2" fill="#8d8d8d" opacity=".7"/><rect x="0" y="125.60000000000001" width="148" height="3" fill="#f2f2f2" opacity=".8"/><rect x="0" y="137.70000000000002" width="148" height="2.2" fill="#8d8d8d" opacity=".7"/><rect x="0" y="139.9" width="148" height="3" fill="#f2f2f2" opacity=".8"/><rect x="0" y="152.0" width="148" height="2.2" fill="#8d8d8d" opacity=".7"/><rect x="0" y="154.2" width="148" height="3" fill="#f2f2f2" opacity=".8"/><rect x="0" y="166.3" width="148" height="2.2" fill="#8d8d8d" opacity=".7"/><rect x="0" y="168.5" width="148" height="3" fill="#f2f2f2" opacity=".8"/>
<rect x="11" y="0" width="5" height="174" fill="#e4e4e4"/>
<rect x="102" y="0" width="6" height="60" fill="#e2e2e2"/>

</g>
<g filter="url(#bl2)">
<path d="M88 174 L96 150 Q120 165 150 150 L160 160 Q185 162 205 168 V180 H88z" fill="#1c1c1c"/>
<path d="M98 140 L100 174 L150 174 L150 140z" fill="#c5aa9e"/>
<path d="M68 84 Q64 50 88 38 Q112 26 138 34 Q158 46 158 74 L155 98 L150 96 Q150 72 142 62 Q122 56 104 58 Q84 60 78 76 L74 100z" fill="#2e2926"/>
<path d="M76 90 Q74 62 96 58 Q120 54 144 60 Q152 72 152 100 L150 132 Q140 162 112 162 Q86 160 80 132z" fill="url(#yf)"/>
<path d="M80 130 Q88 162 112 164 Q138 162 148 130 Q140 150 112 152 Q88 150 80 130z" fill="#8f7568" opacity=".55"/>
<ellipse cx="72" cy="108" rx="5" ry="12" fill="#c2a396"/>
<ellipse cx="154" cy="106" rx="5" ry="12" fill="#c2a396"/>
<ellipse cx="96" cy="98" rx="11" ry="6" fill="#a08880" opacity=".6"/><ellipse cx="131" cy="98" rx="11" ry="6" fill="#a08880" opacity=".6"/><path d="M110 100 Q108 115 106 124 Q113 128 120 124 Q117 112 116 100z" fill="#e6d3ca" opacity=".7"/><path d="M86 92 Q96 88 106 92 M120 92 Q130 88 142 92" stroke="#6e5a52" stroke-width="3" fill="none"/>
<path d="M90 100 Q98 98 105 100 M122 100 Q129 98 137 100" stroke="#8a7067" stroke-width="2.2" fill="none"/>
<path d="M101 136 Q113 132 127 136" stroke="#8b6a60" stroke-width="2.5" fill="none"/>
</g>
</svg></div>
<div class="a" style="left:1540px;top:387px;width:24px;height:24px;border-radius:50%;background:rgba(50,50,50,.75)"></div>
<div class="a" style="left:1540px;top:387px;width:24px;height:24px;border-radius:50%;background:transparent"></div><svg style="left:1542.5px;top:389.5px" width="19" height="19" viewBox="0 0 24 24"><path d="M19 11h-1.7c0 .74-.16 1.43-.43 2.05l1.23 1.23c.56-.98.9-2.09.9-3.28zm-4.02.17c0-.06.02-.11.02-.17V5c0-1.66-1.34-3-3-3S9 3.34 9 5v.18l5.98 5.99zM4.27 3L3 4.27l6.01 6.01V11c0 1.66 1.33 3 2.99 3 .22 0 .44-.03.65-.08l1.66 1.66c-.71.33-1.5.52-2.31.52-2.76 0-5.3-2.1-5.3-5.1H5c0 3.41 2.72 6.23 6 6.72V21h2v-3.28c.91-.13 1.77-.45 2.54-.9L19.73 21 21 19.73 4.27 3z" fill="#e8e8e8"/></svg>
<div class="a" style="left:1544px;top:525px;width:24px;height:24px;border-radius:50%;background:rgba(25,25,25,.85)"></div>
<svg style="left:1549.5px;top:531.5px" width="13" height="11" viewBox="0 0 13 11"><rect x=".9" y=".9" width="11.2" height="9.2" fill="none" stroke="#fff" stroke-width="1.6"/><path d="M3 7.8L6 4.8M3 4.5V7.8H6.5M10 3.2L7 6.2M10 6.5V3.2H6.5" stroke="#fff" stroke-width="1.1" fill="none"/></svg>
<div class="a" style="left:1382.7px;top:530.9px;font-size:11.7px;line-height:11.7px;font-weight:bold;color:#fff;white-space:pre;letter-spacing:0px;text-shadow:0 0 2px rgba(0,0,0,.35)">Yavuz YILDIRIM</div>
</body></html>
